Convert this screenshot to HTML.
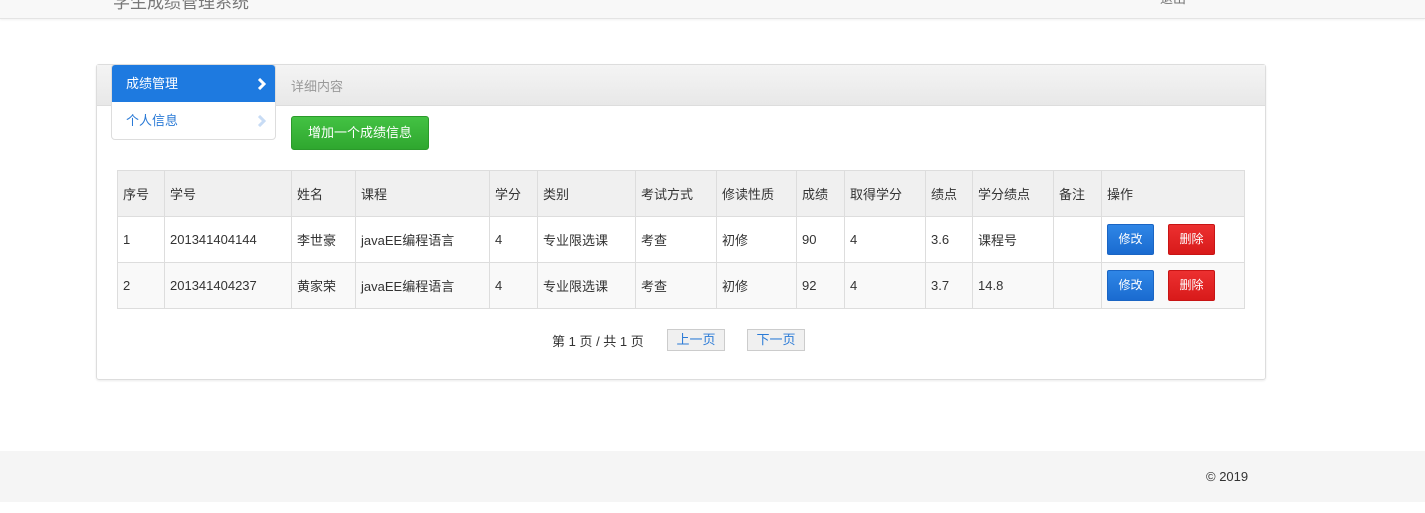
<!DOCTYPE html>
<html><head><meta charset="utf-8"><style>
body{margin:0;width:1425px;height:513px;background:#fff;font-family:"Liberation Sans","Noto Sans CJK SC",sans-serif;font-size:13px;color:#333;position:relative;overflow:hidden}
.nav{position:absolute;left:0;top:0;width:1425px;height:18px;background:#f8f8f8;border-bottom:1px solid #e4e4e4;box-shadow:0 1px 2px rgba(0,0,0,.06);overflow:hidden}
.nav .t{position:absolute;left:113px;top:-12px;font-size:17px;color:#777}
.nav .r{position:absolute;left:1160px;top:-12px;font-size:13px;color:#777}
.panel{position:absolute;left:96px;top:64px;width:1168px;height:314px;border:1px solid #ddd;border-radius:3px;box-shadow:0 1px 2px rgba(0,0,0,.08)}
.ph{height:40px;background:linear-gradient(#f4f4f4,#e8e8e8);border-bottom:1px solid #ddd}
.ph span{position:absolute;left:194px;top:11px;color:#999;font-size:13px}
.menu{position:absolute;left:111px;top:64px;width:163px;height:74px;border:1px solid #ddd;border-radius:4px;background:#fff;overflow:hidden}
.mi{height:37px;line-height:37px;padding-left:14px;position:relative}
.mi.a{background:#1e7ae0;color:#fff;height:37px}
.mi.b{color:#2a7ad6}
.mi svg{position:absolute;right:9px;top:13px}
.add{position:absolute;left:291px;top:116px;width:136px;height:32px;background:linear-gradient(#43c243,#2fa72f);border:1px solid #2b9a2b;border-radius:3px;color:#fff;line-height:32px;text-align:center}
table{position:absolute;left:117px;top:170px;border-collapse:collapse;width:1128px}
td{border:1px solid #ddd;height:45px;padding:0 0 0 5px;font-size:13px}
tr.h td{background:#f0f0f0}
tr.s td{background:#f9f9f9}
.bt{display:inline-block;width:45px;height:29px;line-height:29px;text-align:center;color:#fff;border-radius:2px;font-size:12px;vertical-align:middle}
.bl{background:linear-gradient(#2f86e6,#1a6bd0);border:1px solid #1a65c4}
.rd{background:linear-gradient(#ec3030,#d81a1a);border:1px solid #c81414;margin-left:14px}
.pg{position:absolute;top:331px;font-size:13px}
.pb{position:absolute;top:329px;width:56px;height:20px;border:1px solid #ccc;background:#f0f0f0;color:#2a7ad6;text-align:center;line-height:20px}
.ft{position:absolute;left:0;top:451px;width:1425px;height:51px;background:#f5f5f5}
.ft span{position:absolute;left:1206px;top:18px;font-size:13px}
</style></head><body>
<div class="nav"><span class="t">学生成绩管理系统</span><span class="r">退出</span></div>
<div class="panel"><div class="ph"><span>详细内容</span></div></div>
<div class="menu"><div class="mi a">成绩管理<svg width="9" height="12" viewBox="0 0 9 12"><path d="M2 1l5 5-5 5" stroke="#fff" stroke-width="3" fill="none"/></svg></div><div class="mi b">个人信息<svg width="9" height="12" viewBox="0 0 9 12"><path d="M2 1l5 5-5 5" stroke="#c8dcf5" stroke-width="3" fill="none"/></svg></div></div>
<div class="add">增加一个成绩信息</div>
<table>
<tr class="h"><td style="width:41px">序号</td><td style="width:121px">学号</td><td style="width:58px">姓名</td><td style="width:128px">课程</td><td style="width:42px">学分</td><td style="width:92px">类别</td><td style="width:75px">考试方式</td><td style="width:74px">修读性质</td><td style="width:42px">成绩</td><td style="width:75px">取得学分</td><td style="width:41px">绩点</td><td style="width:75px">学分绩点</td><td style="width:42px">备注</td><td>操作</td></tr>
<tr><td>1</td><td>201341404144</td><td>李世豪</td><td>javaEE编程语言</td><td>4</td><td>专业限选课</td><td>考查</td><td>初修</td><td>90</td><td>4</td><td>3.6</td><td>课程号</td><td></td><td><span class="bt bl">修改</span><span class="bt rd">删除</span></td></tr>
<tr class="s"><td>2</td><td>201341404237</td><td>黄家荣</td><td>javaEE编程语言</td><td>4</td><td>专业限选课</td><td>考查</td><td>初修</td><td>92</td><td>4</td><td>3.7</td><td>14.8</td><td></td><td><span class="bt bl">修改</span><span class="bt rd">删除</span></td></tr>
</table>
<div class="pg" style="left:552px">第 1 页 / 共 1 页</div>
<div class="pb" style="left:667px">上一页</div>
<div class="pb" style="left:747px">下一页</div>
<div class="ft"><span>© 2019</span></div>
</body></html>
